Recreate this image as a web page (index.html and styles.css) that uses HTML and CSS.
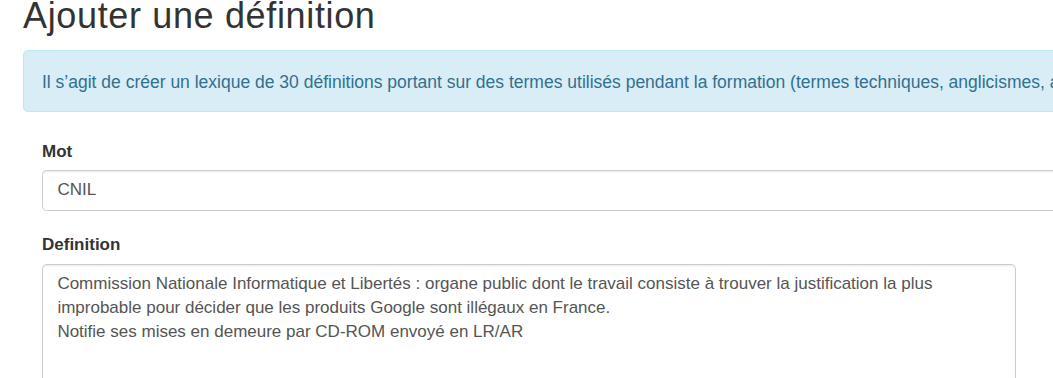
FILE: index.html
```html
<!DOCTYPE html>
<html lang="fr">
<head>
<meta charset="utf-8">
<title>Ajouter une définition</title>
<link rel="stylesheet" href="styles.css">
</head>
<body>
<div class="page">
  <h2 class="title">Ajouter une définition</h2>
  <div class="alert">Il s’agit de créer un lexique de 30 définitions portant sur des termes utilisés pendant la formation (termes techniques, anglicismes, acronymes, etc.).</div>
  <form class="form">
    <div class="form-group">
      <label class="label" for="mot">Mot</label>
      <input class="input" id="mot" type="text" value="CNIL">
    </div>
    <div class="form-group">
      <label class="label" for="def">Definition</label>
      <textarea class="textarea" id="def">Commission Nationale Informatique et Libertés : organe public dont le travail consiste à trouver la justification la plus improbable pour décider que les produits Google sont illégaux en France.
Notifie ses mises en demeure par CD-ROM envoyé en LR/AR</textarea>
    </div>
  </form>
</div>
</body>
</html>
```
FILE: styles.css
```css
html, body {
  margin: 0;
  padding: 0;
  overflow: hidden;
  background: #fff;
}
body {
  font-family: "Liberation Sans", Arial, Helvetica, sans-serif;
  font-size: 17px;
  line-height: 24px;
  color: #333;
}
.page {
  width: 1240px;
  padding-left: 23px;
}
.title {
  font-size: 36px;
  font-weight: 500;
  line-height: 39.6px;
  letter-spacing: 0.65px;
  margin: -4px 0 14.4px 0;
  color: #333;
}
.alert {
  background: #d9edf7;
  border: 1.2px solid #bce8f1;
  color: #31708f;
  border-radius: 4.8px;
  font-size: 17.5px;
  padding: 18.6px 18px 17.4px 18px;
  white-space: nowrap;
  overflow: hidden;
  margin-bottom: 28px;
}
.form {
  padding-left: 19px;
}
.form-group {
  display: flex;
  flex-direction: column;
  align-items: flex-start;
  margin-bottom: 22px;
}
.label {
  font-weight: bold;
  margin-bottom: 6px;
  display: block;
}
.input, .textarea {
  font-family: "Liberation Sans", Arial, Helvetica, sans-serif;
  font-size: 17px;
  line-height: 24px;
  color: #555;
  background: #fff;
  border: 1.2px solid #ccc;
  border-radius: 4.8px;
  box-shadow: inset 0 1.2px 1.2px rgba(0, 0, 0, 0.075);
  padding: 7.2px 14.4px;
  box-sizing: border-box;
  margin: 0;
  outline: none;
}
.input {
  width: 100%;
  height: 40.8px;
}
.textarea {
  width: 974px;
  height: 200px;
  margin-top: 1px;
  resize: none;
  overflow: hidden;
}
```
